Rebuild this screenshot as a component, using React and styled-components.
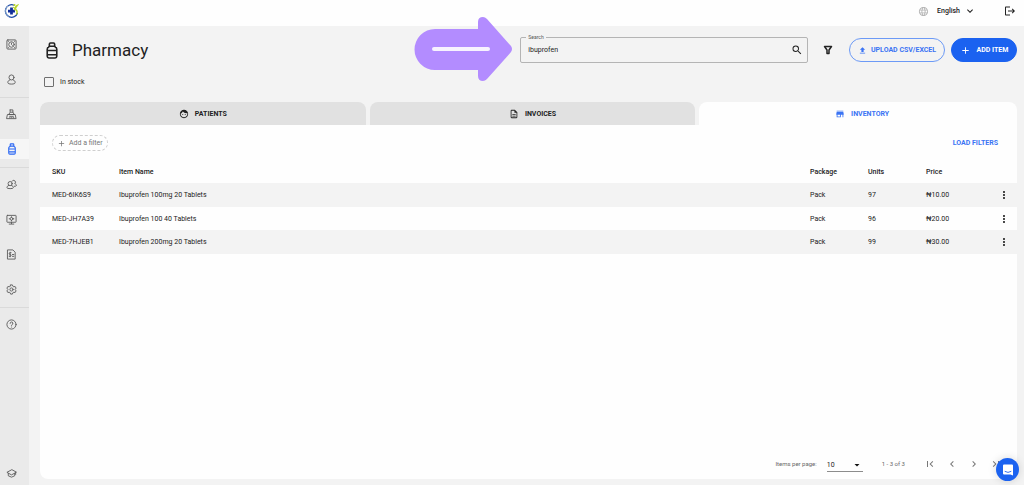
import { useState } from "react";
import styled, { createGlobalStyle } from "styled-components";
import {
  MdAdd,
  MdArrowDropDown,
  MdChevronLeft,
  MdChevronRight,
  MdFace,
  MdFirstPage,
  MdKeyboardArrowDown,
  MdLanguage,
  MdLastPage,
  MdLogout,
  MdMoreVert,
  MdOutlineDescription,
  MdSearch,
  MdStore,
  MdUpload,
} from "react-icons/md";

const GlobalStyle = createGlobalStyle`
  * {
    box-sizing: border-box;
  }
  body {
    margin: 0;
    background-color: #f3f3f3;
    color: #222222;
    font-family: Roboto, "Noto Sans", sans-serif;
    font-size: 7px;
    line-height: 10px;
  }
  button, input, select {
    font: inherit;
    color: inherit;
  }
  button {
    border: none;
    padding: 0;
    background: none;
    cursor: pointer;
  }
  svg {
    display: block;
    flex: none;
  }
`;

const Page = styled.div`
  min-height: 100vh;
  display: flex;
  flex-direction: column;
`;

/* Header */
const Header = styled.header`
  height: 26px;
  padding: 0 8px 4px 4px;
  background-color: #fefefe;
  display: flex;
  align-items: center;
  justify-content: space-between;
`;
const HeaderActions = styled.div`
  display: flex;
  align-items: center;
  gap: 28px;
`;
const Language = styled.button`
  display: flex;
  align-items: center;
  font-weight: 500;
  gap: 8px;

  svg:first-child {
    color: #b5b5b5;
  }
  svg:last-child {
    margin-left: -4px;
  }
`;
const IconButton = styled.button`
  display: flex;
  align-items: center;
  justify-content: center;
  color: ${(props) => props.$color || "#222222"};
`;

/* Sidebar */
const Body = styled.div`
  flex: 1;
  display: flex;
`;
const Sidebar = styled.nav`
  width: 29px;
  padding-top: 1px;
  background-color: #eaeaea;
  display: flex;
  flex-direction: column;
`;
const SideItem = styled.div`
  height: 35px;
  padding: 7px 0;
  margin-top: ${(props) => (props.$last ? "auto" : "0")};
  margin-bottom: ${(props) => (props.$last ? "-6px" : "0")};
  box-shadow: ${(props) => (props.$divider ? "inset 0 1px #dadada" : "none")};
`;
const SideLink = styled.a`
  height: 20px;
  padding-right: 6px;
  display: flex;
  align-items: center;
  justify-content: center;
  color: ${(props) => (props.$active ? "#2a67f3" : "#5c5c5c")};
  background-color: ${(props) => (props.$active ? "#f6f6f6" : "transparent")};
`;

/* Toolbar */
const Main = styled.main`
  flex: 1;
  min-width: 0;
  padding: 11px 7px 6px 11px;
  display: flex;
  flex-direction: column;
`;
const Toolbar = styled.div`
  position: relative;
  height: 26px;
  display: flex;
  align-items: center;
`;
const TitleBox = styled.div`
  flex: 19;
  padding-left: 6px;
  display: flex;
  align-items: center;
  gap: 14px;
`;
const Title = styled.h1`
  margin: 0;
  font-size: 17px;
  line-height: 24px;
  font-weight: 400;
`;
const SearchBox = styled.div`
  position: relative;
  flex: 11;
  height: 26px;
  padding: 0 4px 0 7px;
  border: 1px solid #b4b4b4;
  border-radius: 2px;
  display: flex;
  align-items: center;
`;
const SearchLabel = styled.label`
  position: absolute;
  top: -5px;
  left: 5px;
  padding: 0 2px;
  background-color: #f3f3f3;
  color: #555555;
  font-size: 5px;
  line-height: 8px;
`;
const SearchInput = styled.input`
  flex: 1;
  min-width: 0;
  padding: 0;
  border: none;
  outline: none;
  background: none;
  caret-color: #1b62f0;
`;
const Actions = styled.div`
  padding-left: 14px;
  display: flex;
  align-items: center;
  gap: 6px;
`;
const FilterButton = styled(IconButton)`
  margin-right: 9px;
`;
const PillButton = styled.button`
  height: 24px;
  padding: 0 6px;
  display: flex;
  align-items: center;
  justify-content: center;
  gap: ${(props) => (props.$filled ? "6px" : "4px")};
  min-width: ${(props) => (props.$filled ? "66px" : "96px")};
  border: 1px solid ${(props) => (props.$filled ? "#1b62f0" : "#6c9af6")};
  border-radius: 12px;
  background-color: ${(props) => (props.$filled ? "#1b62f0" : "transparent")};
  color: ${(props) => (props.$filled ? "#ffffff" : "#3b74f4")};
  font-weight: 700;
  white-space: nowrap;
`;
const Pointer = styled.svg`
  position: absolute;
  top: -21px;
  right: 504px;
`;
const StockRow = styled.label`
  margin: 14px 0 15px;
  padding-left: 4px;
  align-self: flex-start;
  display: flex;
  align-items: center;
  gap: 6px;
`;
const Checkbox = styled.input`
  appearance: none;
  width: 10px;
  height: 10px;
  margin: 0;
  border: 1px solid #6f6f6f;
  border-radius: 1px;

  &:checked {
    background-color: #1b62f0;
  }
`;

/* Tabs and panel */
const Card = styled.section`
  flex: 1;
  border-radius: 8px;
  overflow: hidden;
  display: flex;
  flex-direction: column;
`;
const Tabs = styled.div`
  display: flex;
  gap: 4px;
`;
const Tab = styled.button`
  flex: 0 0 calc(100% / 3);
  height: 23px;
  border-radius: 8px 8px 0 0;
  display: flex;
  align-items: center;
  justify-content: center;
  gap: 6px;
  background-color: ${(props) => (props.$active ? "#fefefe" : "#e1e1e1")};
  color: ${(props) => (props.$active ? "#3b74f4" : "#222222")};
  font-weight: 700;
`;
const Panel = styled.div`
  flex: 1;
  background-color: #fefefe;
  display: flex;
  flex-direction: column;
`;
const FilterBar = styled.div`
  padding: 10px 19px 8px 12px;
  display: flex;
  align-items: center;
  justify-content: space-between;
`;
const AddFilter = styled.button`
  height: 16px;
  padding: 0 4px;
  border: 1px dashed #cfcfcf;
  border-radius: 8px;
  display: flex;
  align-items: center;
  gap: 3px;
  color: #777777;
`;
const LoadFilters = styled.button`
  color: #3b74f4;
  font-weight: 700;
`;
const Table = styled.table`
  width: 100%;
  table-layout: fixed;
  border-collapse: collapse;
  text-align: left;
`;
const HeadCell = styled.th`
  width: ${(props) => props.$width || "auto"};
  height: 24px;
  padding: 2px 0 0 ${(props) => (props.$first ? "12px" : "0")};
  font-weight: 500;
`;
const Row = styled.tr`
  height: 23px;

  &:nth-child(odd) {
    height: 24px;
    background-color: #f3f3f3;
  }
`;
const Cell = styled.td`
  padding: 0 0 0 ${(props) => (props.$first ? "12px" : "0")};
`;
const MenuButton = styled(IconButton)`
  width: 100%;
`;

/* Pagination */
const Pagination = styled.div`
  margin-top: auto;
  padding: 0 15px 7px;
  display: flex;
  align-items: center;
  justify-content: flex-end;
  color: #686868;
  font-size: 6px;
`;
const SelectBox = styled.div`
  position: relative;
  margin: 3px 19px 0 10px;
`;
const PageSize = styled.select`
  appearance: none;
  width: 36px;
  height: 13px;
  padding: 0;
  border: none;
  border-bottom: 1px solid #8c8c8c;
  border-radius: 0;
  background: none;
  color: #222222;
  font-size: 7px;
`;
const SelectArrow = styled(MdArrowDropDown)`
  position: absolute;
  top: 0;
  right: 0;
  color: #111111;
  pointer-events: none;
`;
const PageButtons = styled.div`
  margin-left: 19px;
  display: flex;
  gap: 10px;
`;
const ChatButton = styled.button`
  position: fixed;
  right: 5px;
  bottom: 4px;
  width: 23px;
  height: 23px;
  border-radius: 50%;
  display: flex;
  align-items: center;
  justify-content: center;
  background-color: #1b62f0;
  box-shadow: 0 0 8px rgba(0, 0, 0, 0.15);
`;

const Bottle = ({ width, height, stroke }) => (
  <svg width={width} height={height} viewBox="0 0 22 32" fill="none" stroke="currentColor" strokeWidth={stroke} strokeLinejoin="round">
    <path d="M6 8V4Q6 2 8 2H14Q16 2 16 4V8M4.500 8H17.500" />
    <path d="M5 8V9.500Q2 10.500 2 13.500V27Q2 30 5 30H17Q20 30 20 27V13.500Q20 10.500 17 9.500V8M2 16H20M2 24H20" />
  </svg>
);

const Funnel = () => (
  <svg width="12" height="12" viewBox="0 0 24 24" fill="none" stroke="currentColor" strokeWidth="3" strokeLinejoin="round">
    <path d="M5 5H19L14 12V19H10V12Z" />
  </svg>
);

const Line = ({ children }) => (
  <svg width="11" height="11" viewBox="0 0 24 24" fill="none" stroke="currentColor" strokeWidth="2" strokeLinecap="round" strokeLinejoin="round">
    {children}
  </svg>
);

const Logo = () => (
  <svg width="16" height="16" viewBox="0 0 32 32" fill="none">
    <path d="M20 4.500A12.500 12.500 0 1 0 27 20" stroke="#1c4aa6" strokeWidth="2.500" />
    <path d="M8 6A12.500 12.500 0 0 0 10 27" stroke="#8ba9cf" strokeWidth="2" />
    <path d="M15 9V23M8 16H22" stroke="#122f99" strokeWidth="5.500" />
    <path d="M18 8Q22 11 22 15Q24 8 29 3Q23 4 21 10Z" fill="#b5d320" stroke="#b5d320" strokeWidth="1.500" />
    <path d="M24 13Q28 17 25 23" stroke="#b5d320" strokeWidth="2.500" />
    <circle cx="21" cy="4" r="2" fill="#b5d320" />
  </svg>
);

const menu = [
  {
    name: "Appointments",
    icon: (
      <Line>
        <rect x="2" y="2" width="20" height="20" rx="2" />
        <circle cx="12" cy="12" r="6" />
        <path d="M12 9v3l2 2M5 5h.5M18.500 5h.5M5 19h.5M18.500 19h.5" />
      </Line>
    ),
  },
  {
    name: "Patients",
    icon: (
      <Line>
        <circle cx="12" cy="7.500" r="5.500" />
        <path d="M8.500 13C5 14 4 16 4 18.500C4 21 7 22 12 22S20 21 20 18.500C20 16 19 14 15.500 13" />
      </Line>
    ),
  },
  {
    name: "Laboratory",
    divider: true,
    icon: (
      <Line>
        <path d="M9 2h6v5l3 5H6l3-5V2M4 12h16l2 9H2zM8 16h8M10 7h5M8 19h1M12 19h1M16 19h1" />
      </Line>
    ),
  },
  { name: "Pharmacy", active: true, icon: <Bottle width={8} height={12} stroke={3} /> },
  {
    name: "Staff",
    divider: true,
    icon: (
      <Line>
        <circle cx="9" cy="10" r="4.500" />
        <path d="M6 14C3 15 2 17 2 19Q2 21 9 21T16 19C16 17 15 15 12 14M13 5a4 4 0 1 1 6 5c3 1 4 3 4 4q0 2-5 2" />
      </Line>
    ),
  },
  {
    name: "Monitoring",
    icon: (
      <Line>
        <rect x="2" y="3" width="20" height="15" rx="1" />
        <circle cx="12" cy="10.500" r="3" />
        <path d="M12 6v1M12 14v1M8 10.500H7M17 10.500h-1M12 18v3M7 22h10" />
      </Line>
    ),
  },
  {
    name: "Billing",
    icon: (
      <Line>
        <path d="M4 2h11l5 5v15H4zM11 8H9q-2 0-2 2t2 2t2 2t-2 2H7M9 7v10M14 12h3M14 16h3" />
      </Line>
    ),
  },
  {
    name: "Settings",
    icon: (
      <Line>
        <path d="M10 2h4l1 3 2 1 3-.5 2 3.500-2 2.500v1l2 2.500-2 3.500-3-.5-2 1-1 3h-4l-1-3-2-1-3 .5L2 15l2-2.500v-1L2 9l2-3.500 3 .5 2-1z" />
        <circle cx="12" cy="12" r="3.500" />
      </Line>
    ),
  },
  {
    name: "Help",
    divider: true,
    icon: (
      <Line>
        <circle cx="12" cy="12" r="10" />
        <path d="M9 9.500a3 3 0 1 1 4 2.800q-1 .5-1 1.700M12 17.500v.1" />
      </Line>
    ),
  },
  {
    name: "Learning",
    last: true,
    icon: (
      <Line>
        <path d="M12 4L2 9.500L12 15L22 9.500ZM5 12v5q7 6 14 0v-5M21 10v4" />
      </Line>
    ),
  },
];

const items = [
  { sku: "MED-6IK6S9", name: "Ibuprofen 100mg 20 Tablets", pack: "Pack", units: 97, price: "₦10.00" },
  { sku: "MED-JH7A39", name: "Ibuprofen 100 40 Tablets", pack: "Pack", units: 96, price: "₦20.00" },
  { sku: "MED-7HJEB1", name: "Ibuprofen 200mg 20 Tablets", pack: "Pack", units: 99, price: "₦30.00" },
];

const App = () => {
  const [search, setSearch] = useState("ibuprofen");

  return (
    <Page>
      <GlobalStyle />
      <Header>
        <Logo />
        <HeaderActions>
          <Language>
            <MdLanguage size={11} />
            English
            <MdKeyboardArrowDown size={12} />
          </Language>
          <IconButton aria-label="Log out">
            <MdLogout size={12} />
          </IconButton>
        </HeaderActions>
      </Header>
      <Body>
        <Sidebar>
          {menu.map((item) => (
            <SideItem key={item.name} $divider={item.divider} $last={item.last}>
              <SideLink href="#" aria-label={item.name} $active={item.active}>
                {item.icon}
              </SideLink>
            </SideItem>
          ))}
        </Sidebar>
        <Main>
          <Toolbar>
            <TitleBox>
              <Bottle width={12} height={17} stroke={3} />
              <Title>Pharmacy</Title>
            </TitleBox>
            <SearchBox>
              <SearchLabel htmlFor="search">Search</SearchLabel>
              <SearchInput id="search" autoFocus value={search} onChange={(e) => setSearch(e.target.value)} />
              <IconButton aria-label="Search">
                <MdSearch size={12} />
              </IconButton>
            </SearchBox>
            <Actions>
              <FilterButton aria-label="Filter">
                <Funnel />
              </FilterButton>
              <PillButton>
                <MdUpload size={9} />
                UPLOAD CSV/EXCEL
              </PillButton>
              <PillButton $filled>
                <MdAdd size={11} />
                ADD ITEM
              </PillButton>
            </Actions>
            <Pointer width="99" height="66" viewBox="0 0 99 66" aria-hidden="true">
              <path
                d="M21 13H64V6Q64 1 69 1Q71 1 73 3L97 30Q99 33 97 36L73 63Q71 65 69 65Q64 65 64 60V54H21A20.500 20.500 0 0 1 21 13Z"
                fill="#b38cff"
              />
              <path d="M20 33H74" stroke="#f7f2ff" strokeWidth="4" strokeLinecap="round" />
            </Pointer>
          </Toolbar>
          <StockRow>
            <Checkbox type="checkbox" />
            In stock
          </StockRow>
          <Card>
            <Tabs role="tablist">
              <Tab role="tab">
                <MdFace size={10} />
                PATIENTS
              </Tab>
              <Tab role="tab">
                <MdOutlineDescription size={10} />
                INVOICES
              </Tab>
              <Tab role="tab" aria-selected="true" $active>
                <MdStore size={10} />
                INVENTORY
              </Tab>
            </Tabs>
            <Panel>
              <FilterBar>
                <AddFilter>
                  <MdAdd size={9} />
                  Add a filter
                </AddFilter>
                <LoadFilters>LOAD FILTERS</LoadFilters>
              </FilterBar>
              <Table>
                <thead>
                  <tr>
                    <HeadCell $first $width="79px">SKU</HeadCell>
                    <HeadCell>Item Name</HeadCell>
                    <HeadCell $width="58px">Package</HeadCell>
                    <HeadCell $width="58px">Units</HeadCell>
                    <HeadCell $width="65px">Price</HeadCell>
                    <HeadCell $width="26px" aria-label="Actions" />
                  </tr>
                </thead>
                <tbody>
                  {items.map((item) => (
                    <Row key={item.sku}>
                      <Cell $first>{item.sku}</Cell>
                      <Cell>{item.name}</Cell>
                      <Cell>{item.pack}</Cell>
                      <Cell>{item.units}</Cell>
                      <Cell>{item.price}</Cell>
                      <Cell>
                        <MenuButton aria-label="More actions">
                          <MdMoreVert size={12} />
                        </MenuButton>
                      </Cell>
                    </Row>
                  ))}
                </tbody>
              </Table>
              <Pagination>
                <label htmlFor="page-size">Items per page:</label>
                <SelectBox>
                  <PageSize id="page-size" defaultValue="10">
                    <option>10</option>
                    <option>25</option>
                    <option>50</option>
                  </PageSize>
                  <SelectArrow size={12} />
                </SelectBox>
                <span>1 - 3 of 3</span>
                <PageButtons>
                  <IconButton $color="#777777" aria-label="First page">
                    <MdFirstPage size={12} />
                  </IconButton>
                  <IconButton $color="#777777" aria-label="Previous page">
                    <MdChevronLeft size={12} />
                  </IconButton>
                  <IconButton $color="#777777" aria-label="Next page">
                    <MdChevronRight size={12} />
                  </IconButton>
                  <IconButton $color="#777777" aria-label="Last page">
                    <MdLastPage size={12} />
                  </IconButton>
                </PageButtons>
              </Pagination>
            </Panel>
          </Card>
        </Main>
      </Body>
      <ChatButton aria-label="Open chat">
        <svg width="12" height="12" viewBox="0 0 24 24">
          <path d="M4 1H20Q22 1 22 3V23L17 21H4Q2 21 2 19V3Q2 1 4 1Z" fill="#fff" />
          <path d="M6 15Q12 19 18 15" fill="none" stroke="#1b62f0" strokeWidth="1.800" strokeLinecap="round" />
        </svg>
      </ChatButton>
    </Page>
  );
};

export default App;
